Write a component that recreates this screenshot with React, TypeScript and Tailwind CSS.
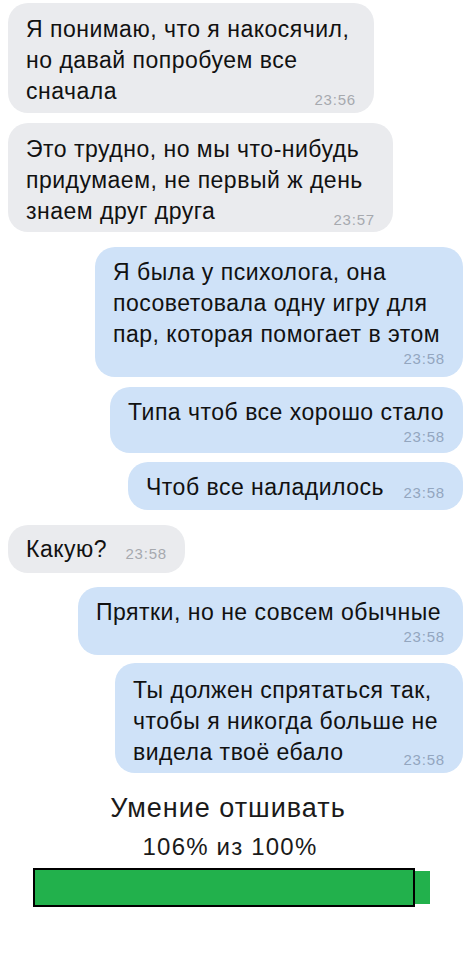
import React from "react";

type Msg = {
  side: "in" | "out";
  w: number;
  lines: string[];
  time: string;
  inline: boolean;
  cls: string;
  tcls: string;
  mt: string;
};

const msgs: Msg[] = [
  { side: "in", w: 366, lines: ["Я понимаю, что я накосячил,", "но давай попробуем все", "сначала"], time: "23:56", inline: true, cls: "pt-[11px] pb-[6px]", tcls: "translate-y-[6px]", mt: "mt-[3px]" },
  { side: "in", w: 385, lines: ["Это трудно, но мы что-нибудь", "придумаем, не первый ж день", "знаем друг друга"], time: "23:57", inline: true, cls: "pt-[11px] pb-[5px]", tcls: "translate-y-[6px]", mt: "mt-[10px]" },
  { side: "out", w: 368, lines: ["Я была у психолога, она", "посоветовала одну игру для", "пар, которая помогает в этом"], time: "23:58", inline: false, cls: "pt-[10px] pb-[9px]", tcls: "", mt: "mt-[15px]" },
  { side: "out", w: 353, lines: ["Типа чтоб все хорошо стало"], time: "23:58", inline: false, cls: "pt-[10px] pb-[7px]", tcls: "", mt: "mt-[10px]" },
  { side: "out", w: 335, lines: ["Чтоб все наладилось"], time: "23:58", inline: true, cls: "pt-[10px] pb-[7px]", tcls: "translate-y-[3px]", mt: "mt-[9px]" },
  { side: "in", w: 177, lines: ["Какую?"], time: "23:58", inline: true, cls: "pt-[9px] pb-[8px]", tcls: "translate-y-[2px]", mt: "mt-[15px]" },
  { side: "out", w: 385, lines: ["Прятки, но не совсем обычные"], time: "23:58", inline: false, cls: "pt-[10px] pb-[9px]", tcls: "", mt: "mt-[14px]" },
  { side: "out", w: 348, lines: ["Ты должен спрятаться так,", "чтобы я никогда больше не", "видела твоё ебало"], time: "23:58", inline: true, cls: "pt-[12px] pb-[5px]", tcls: "translate-y-[5px]", mt: "mt-[8px]" },
];

function Bubble({ m }: { m: Msg }) {
  const isIn = m.side === "in";
  const bg = isIn ? "bg-[#eaebee]" : "bg-[#cfe2f8]";
  const tc = isIn ? "text-[#a6a9ae]" : "text-[#93a6bf]";
  const last = m.lines.length - 1;
  return (
    <div className={`flex ${isIn ? "justify-start pl-[8px]" : "justify-end pr-[11px]"} ${m.mt}`}>
      <div
        className={`${bg} rounded-[20px] px-[18px] ${m.cls} flex flex-col`}
        style={{ width: m.w }}
      >
        {m.lines.map((l, i) =>
          i === last && m.inline ? (
            <div key={i} className="flex items-baseline justify-between gap-2 h-[31px] leading-[31px] whitespace-nowrap">
              <span>{l}</span>
              <span className={`text-[15px] tracking-[0.8px] ${tc} ${m.tcls}`}>{m.time}</span>
            </div>
          ) : (
            <div key={i} className="h-[31px] leading-[31px] whitespace-nowrap">{l}</div>
          )
        )}
        {!m.inline && (
          <div className={`text-right text-[15px] tracking-[0.8px] leading-[18px] ${tc}`}>{m.time}</div>
        )}
      </div>
    </div>
  );
}

export default function App() {
  return (
    <div
      className="w-[474px] h-[960px] bg-white text-[#111111] text-[23px] tracking-[0.5px] overflow-hidden"
      style={{ fontFamily: '"Liberation Sans", Arial, sans-serif' }}
    >
      {msgs.map((m, i) => (
        <Bubble key={i} m={m} />
      ))}
      <div className="mt-[19px] pr-[18px] text-center text-[#1a1a1a]">
        <div className="text-[27px] tracking-[1px] leading-[32px]">Умение отшивать</div>
        <div className="mt-[7px] text-[24px] tracking-[1.2px] leading-[32px] pl-[4px]">106% из 100%</div>
      </div>
      <div className="mt-[5px] pl-[33px] flex items-center">
        <div className="w-[382px] h-[39px] border-2 border-black bg-[#22b14c]" />
        <div className="w-[15px] h-[33px] bg-[#22b14c]" />
      </div>
    </div>
  );
}
